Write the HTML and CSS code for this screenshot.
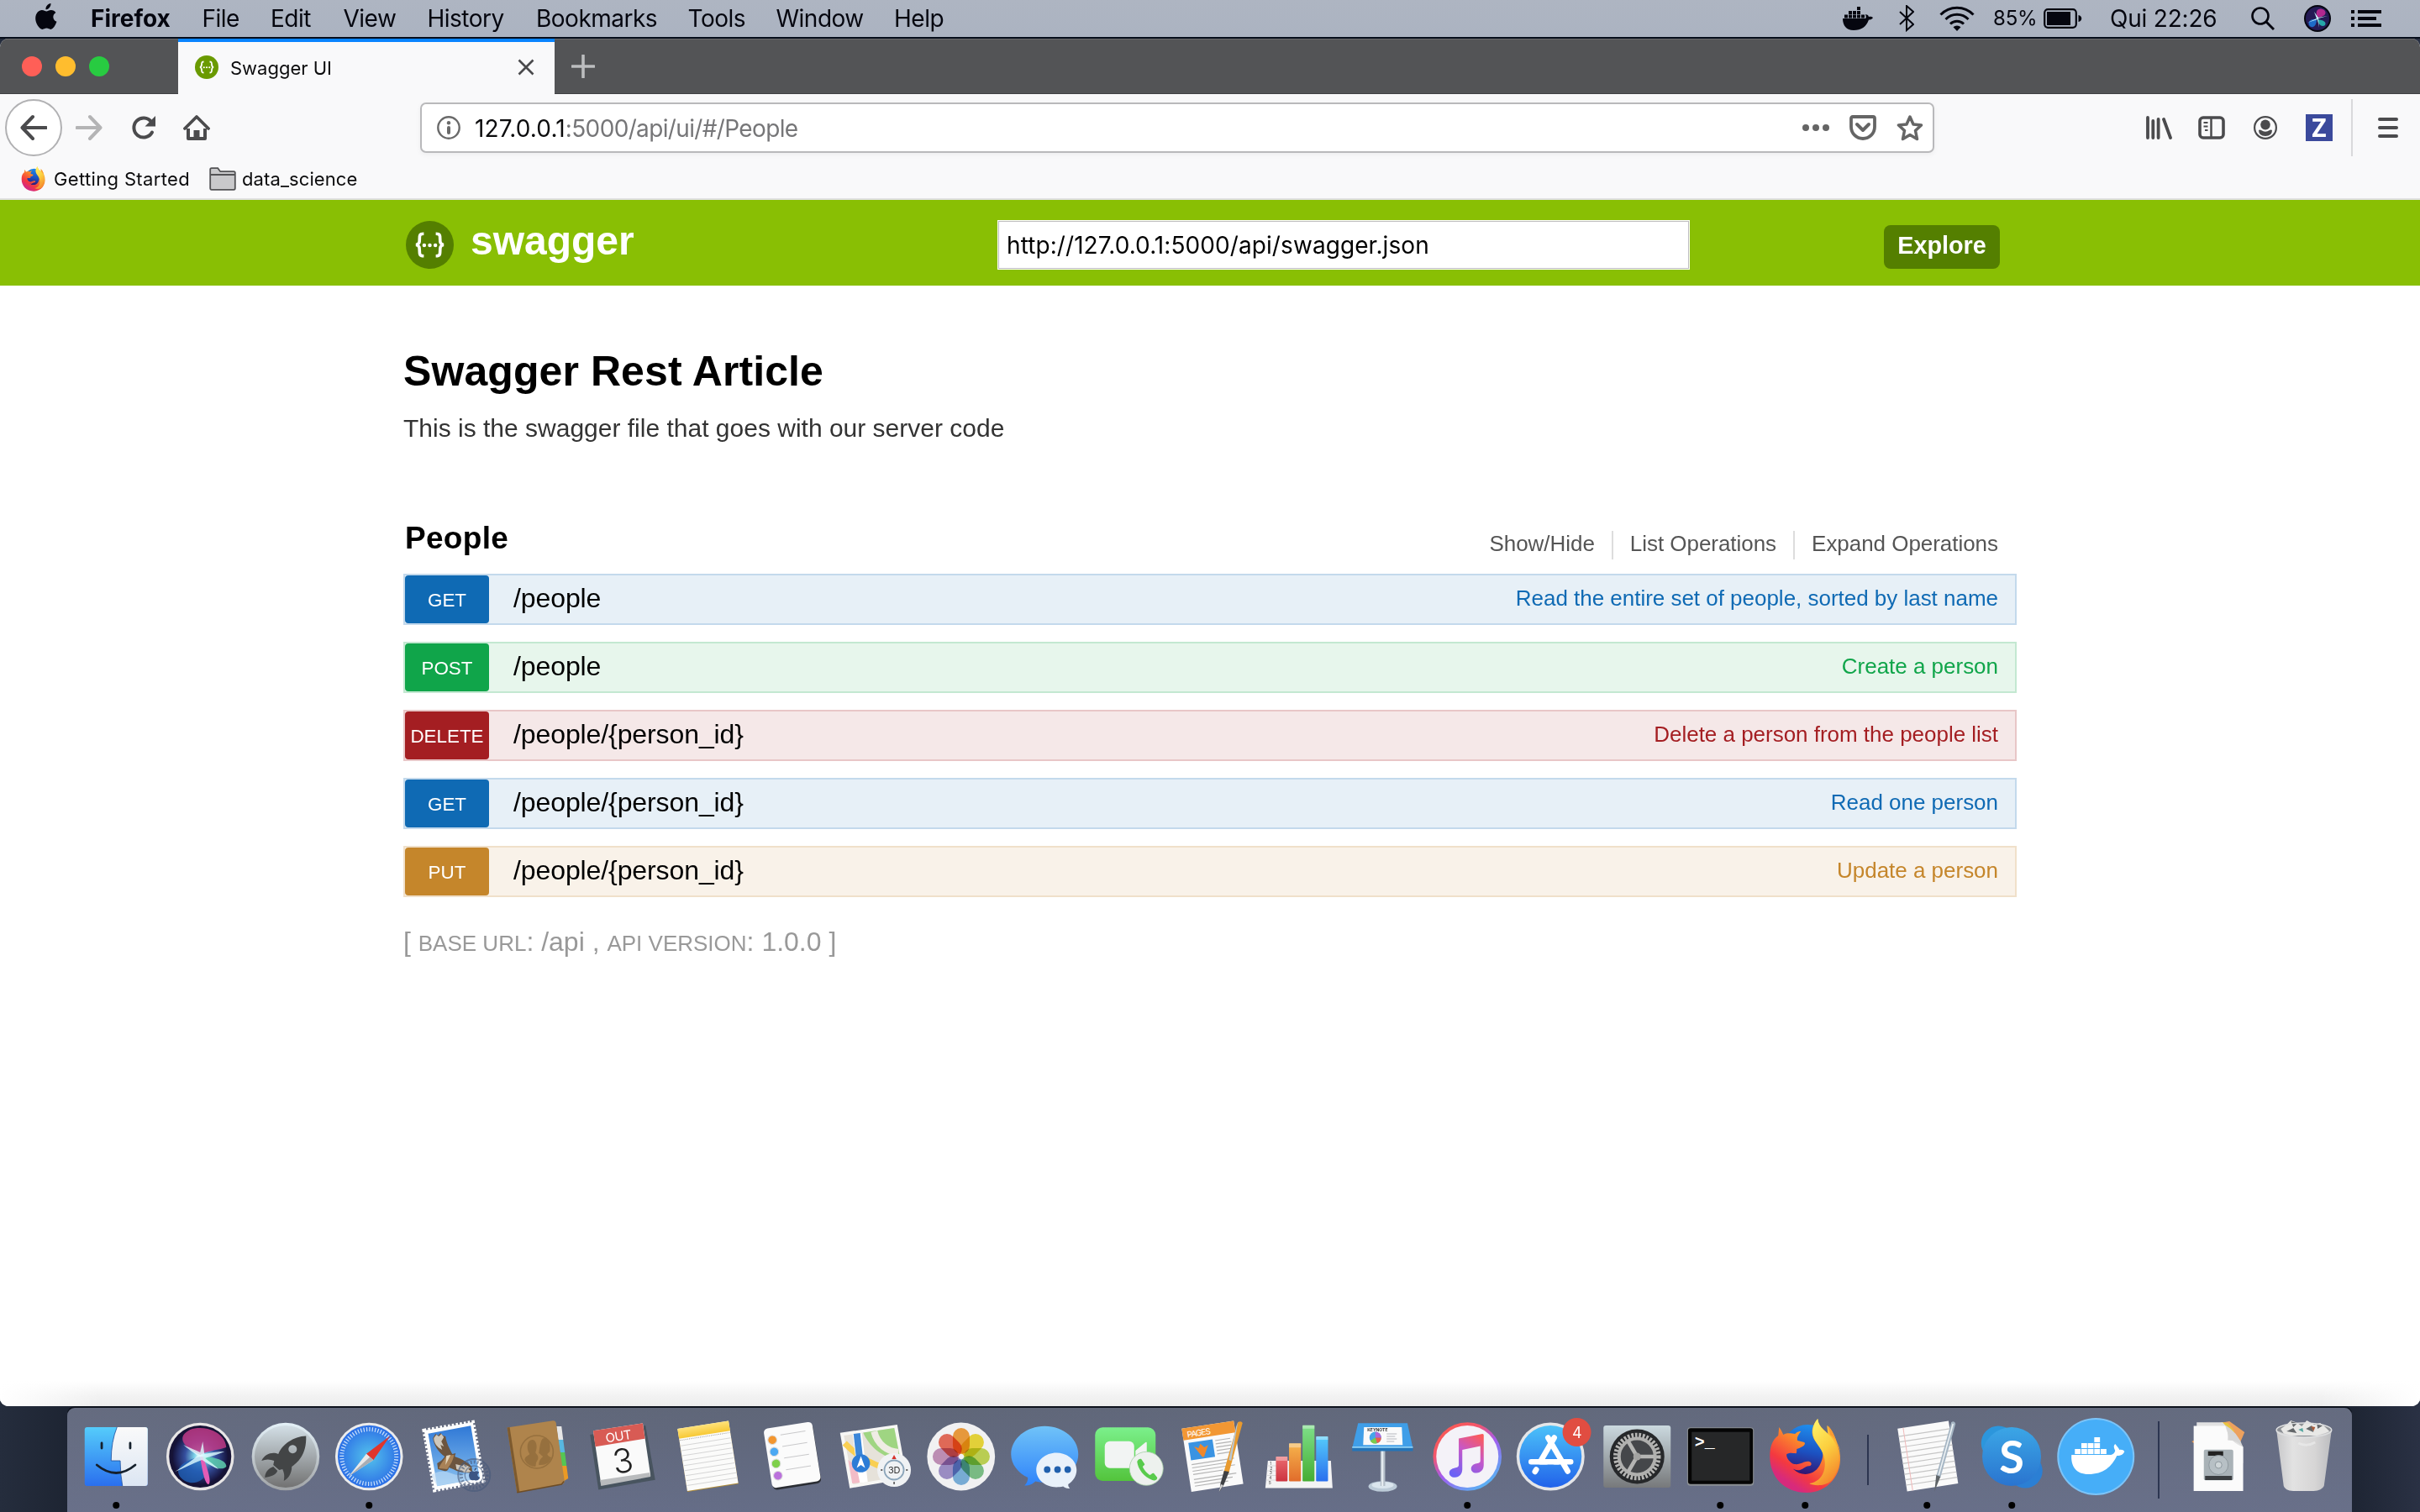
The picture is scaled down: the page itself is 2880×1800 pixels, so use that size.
FILE: index.html
```html
<!DOCTYPE html>
<html lang="en">
<head>
<meta charset="utf-8">
<title>Swagger UI</title>
<link rel="stylesheet" href="styles.css">
</head>
<body>
<svg class="defs" width="0" height="0" aria-hidden="true">
  <defs>
    <linearGradient id="gBlue" x1="0" y1="0" x2="0" y2="1"><stop offset="0" stop-color="#55ccfb"/><stop offset="1" stop-color="#2a6fee"/></linearGradient>
    <linearGradient id="gPaper" x1="0" y1="0" x2="0" y2="1"><stop offset="0" stop-color="#fafafa"/><stop offset="1" stop-color="#dce6f3"/></linearGradient>
    <linearGradient id="gLaunch" x1="0" y1="0" x2="0" y2="1"><stop offset="0" stop-color="#d3dfe6"/><stop offset="1" stop-color="#727272"/></linearGradient>
    <linearGradient id="gRing" x1="0" y1="0" x2="0" y2="1"><stop offset="0" stop-color="#e4f1f8"/><stop offset="1" stop-color="#a0a3a6"/></linearGradient>
    <radialGradient id="gSafari"><stop offset="0" stop-color="#54c3ec"/><stop offset="1" stop-color="#2c6fe6"/></radialGradient>
    <linearGradient id="gSky" x1="0" y1="0" x2="0" y2="1"><stop offset="0" stop-color="#2f78d6"/><stop offset="1" stop-color="#8cc3f0"/></linearGradient>
    <linearGradient id="gYellow" x1="0" y1="0" x2="0" y2="1"><stop offset="0" stop-color="#ffe27a"/><stop offset="1" stop-color="#f7c833"/></linearGradient>
    <linearGradient id="gMsg" x1="0" y1="0" x2="0" y2="1"><stop offset="0" stop-color="#70c3f8"/><stop offset="1" stop-color="#2f83fa"/></linearGradient>
    <linearGradient id="gGreen" x1="0" y1="0" x2="0" y2="1"><stop offset="0" stop-color="#7bf08b"/><stop offset="1" stop-color="#53c43c"/></linearGradient>
    <linearGradient id="gApp" x1="0" y1="0" x2="0" y2="1"><stop offset="0" stop-color="#4cc2f9"/><stop offset="1" stop-color="#2162ea"/></linearGradient>
    <linearGradient id="gTunes" x1="0.1" y1="0" x2="0.8" y2="1"><stop offset="0" stop-color="#fb5c4c"/><stop offset=".3" stop-color="#f4556b"/><stop offset=".55" stop-color="#a25cf0"/><stop offset="1" stop-color="#4cc0f5"/></linearGradient>
    <linearGradient id="gNote" x1="0.8" y1="0" x2="0.3" y2="1"><stop offset="0" stop-color="#fb5a5c"/><stop offset=".45" stop-color="#c657c9"/><stop offset="1" stop-color="#6c62f5"/></linearGradient>
    <linearGradient id="gMetal" x1="0" y1="0" x2="0" y2="1"><stop offset="0" stop-color="#cbd9df"/><stop offset="1" stop-color="#77797b"/></linearGradient>
    <linearGradient id="gFox" x1=".8" y1="0" x2=".25" y2=".85"><stop offset="0" stop-color="#ffcf3d"/><stop offset=".45" stop-color="#fb8a2c"/><stop offset=".8" stop-color="#f4393f"/><stop offset="1" stop-color="#d72a7c"/></linearGradient>
    <linearGradient id="gFlame" x1=".2" y1="0" x2=".6" y2="1"><stop offset="0" stop-color="#fff36a"/><stop offset=".5" stop-color="#fbcf3f"/><stop offset="1" stop-color="#f5882c"/></linearGradient>
    <linearGradient id="gGlobe" x1=".6" y1="0" x2=".4" y2="1"><stop offset="0" stop-color="#1f8fee"/><stop offset=".55" stop-color="#1c50c0"/><stop offset="1" stop-color="#36116b"/></linearGradient>
    <linearGradient id="gSkype" x1="0" y1="0" x2="0" y2="1"><stop offset="0" stop-color="#3ba6e6"/><stop offset="1" stop-color="#2a74cf"/></linearGradient>
    <radialGradient id="gSiri"><stop offset="0" stop-color="#ffffff"/><stop offset=".2" stop-color="#7fd6ea"/><stop offset=".55" stop-color="#354f9e"/><stop offset="1" stop-color="#15123a"/></radialGradient>
    <linearGradient id="gTrash" x1="0" y1="0" x2="1" y2="0"><stop offset="0" stop-color="#c8c8ca"/><stop offset=".3" stop-color="#e2e2e2"/><stop offset=".7" stop-color="#d6d5d5"/><stop offset="1" stop-color="#bcbdc0"/></linearGradient>
    <linearGradient id="gRed" x1="0" y1="0" x2="0" y2="1"><stop offset="0" stop-color="#ea6b70"/><stop offset="1" stop-color="#cc3440"/></linearGradient>
    <linearGradient id="gOrange" x1="0" y1="0" x2="0" y2="1"><stop offset="0" stop-color="#f6b44c"/><stop offset="1" stop-color="#e16c2b"/></linearGradient>
    <linearGradient id="gLime" x1="0" y1="0" x2="0" y2="1"><stop offset="0" stop-color="#7fe08a"/><stop offset="1" stop-color="#45ad33"/></linearGradient>
    <symbol id="firefox" viewBox="-44 12 90 90">
      <circle cx="3" cy="50" r="30" fill="url(#gGlobe)"/>
      <path fill="url(#gFox)" d="M-31 23C-28 27-27 30-26 32C-20 29-16 31-12 31C-9 28-7 28-5 28C-9 33-10 36-9 39L-1 41C1 43-1 46-10 49C-10 53-10 55-12 54C-15 54-18 53-22 55C-23 60-17 66-13 67C-4 68-2 63 5 64C8 65 8 68 6 69C1 69-1 72-6 74C-12 75-14 72-14 73C-5 82 10 81 17 69C23 58 22 51 17 45C7 36 5 25 15 13C15 21 23 26 27 31L26 21C34 28 38 40 41 52C46 80 26 101 2 101C-25 101-42 82-42 58C-42 46-39 38-32 33Z"/>
      <path fill="url(#gFlame)" d="M15 13C16 25 27 29 32 36C44 51 42 73 32 86C24 94 10 93 5 90C22 88 29 68 19 50C14 42 8 36 9 26C10 20 12 16 15 13Z"/>
      <path fill="#fb9b32" d="M27 21C35 29 36 38 42 52C40 44 36 36 30 32Z"/>
    </symbol>
    <symbol id="braces" viewBox="0 0 56 56">
      <circle cx="28" cy="28" r="28"/>
      <g fill="none" stroke="#fff" stroke-width="3.6"><path d="M21 15c-5 0-5 2-5 6s0 6-4 7c4 1 4 3 4 7s0 6 5 6"/><path d="M35 15c5 0 5 2 5 6s0 6 4 7c-4 1-4 3-4 7s0 6-5 6"/></g>
      <g fill="#fff"><circle cx="21.500" cy="28.500" r="2.200"/><circle cx="28" cy="28.500" r="2.200"/><circle cx="34.500" cy="28.500" r="2.200"/></g>
    </symbol>
  </defs>
</svg>

<header class="menubar">
  <svg class="apple" viewBox="0 0 26 32"><path d="M18.500 0c.3 3.600-2.600 7.400-6 7.300C12 3.900 15.200.4 18.500 0zM13.300 9.500c1.300 0 3-1.700 5.600-1.600 2.300.1 4.300 1.200 5.500 3-4.500 2.700-3.900 8.900 1.100 10.900-1.500 4.300-4.400 9-7 9.100-1.900.1-2.700-1.300-5-1.300-2.400 0-3.200 1.300-5 1.300C4.600 31 0 23.400.2 17.600.4 11.500 4.200 8 7.900 8c2.300 0 4 1.500 5.400 1.500z"/></svg>
  <nav class="menus">
    <span class="app">Firefox</span><span>File</span><span>Edit</span><span>View</span><span>History</span><span>Bookmarks</span><span>Tools</span><span>Window</span><span>Help</span>
  </nav>
  <div class="status">
    <svg class="s-docker" viewBox="0 0 36 28"><path d="M0 14h27c1-1 1-2 0-5l3 1 1 2c2-.5 4 0 5 1-1 2-3 2.500-5 2.500C28 24 22 28 13 28 4 28 0 22 0 14zM2 9.500h4v4H2zM7 9.500h4v4H7zM12 9.500h4v4h-4zM17 9.500h4v4h-4zM22 9.500h4v4h-4zM7 5h4v4H7zM12 5h4v4h-4zM17 5h4v4h-4zM17 0h4v4h-4z"/></svg>
    <svg class="s-bt" viewBox="0 0 18 32"><path d="M1 8l16 15-8 7V1l8 7L1 23" fill="none" stroke="#05060f" stroke-width="2"/></svg>
    <svg class="s-wifi" viewBox="0 0 42 30"><g fill="none" stroke="#05060f" stroke-width="3"><path d="M1.500 10.500a27 27 0 0 1 39 0"/><path d="M7.500 16a19 19 0 0 1 27 0"/><path d="M13 21.500a11.500 11.500 0 0 1 16 0"/></g><path d="M21 30l-4.500-4.800a6.500 6.500 0 0 1 9 0z"/></svg>
    <span class="percent">85%</span>
    <svg class="s-bat" viewBox="0 0 46 24"><rect x="1.200" y="1.200" width="37.600" height="21.600" rx="4" fill="none" stroke="#05060f" stroke-width="2.200"/><rect x="4" y="4" width="28" height="16"/><path d="M41.500 8c5 1 5 7 0 8z"/></svg>
    <span class="clock">Qui 22:26</span>
    <svg class="s-search" viewBox="0 0 28 28"><circle cx="11" cy="11" r="9.500" fill="none" stroke="#05060f" stroke-width="2.600"/><path d="M18 18l9 9" stroke="#05060f" stroke-width="3"/></svg>
    <svg class="s-siri" viewBox="0 0 32 32"><circle cx="16" cy="16" r="16"/><circle cx="16" cy="16" r="14" fill="#241a55"/><path d="M16 15C12 6 18 2 24 6c4 4 0 8-8 9z" fill="#b0288e"/><path d="M15 17C8 16 4 20 6 24c4 5 9 1 9-7z" fill="#1e6bc8"/><path d="M16 17c7 1 11 3 9 7-4 3-8-1-9-7z" fill="#25a6a9"/><path d="M4 21l12-4 2 10-1-11 11-3-11 2-5-7 3 8z" fill="#c9f6ff"/></svg>
    <svg class="s-list" viewBox="0 0 36 20"><path d="M0 0h4v4H0zM8 0h28v4H8zM0 8h4v4H0zM8 8h22v4H8zM0 16h4v4H0zM8 16h28v4H8z"/></svg>
  </div>
</header>

<main class="window">
  <div class="tabstrip">
    <div class="lights"><i class="red"></i><i class="amber"></i><i class="green"></i></div>
    <div class="tab">
      <svg class="favicon" fill="#6a9a00"><use href="#braces"/></svg>
      <span>Swagger UI</span>
      <svg class="close" viewBox="0 0 20 20"><path d="M1.500 1.500l17 17M18.500 1.500l-17 17" stroke="#4a4a4c" stroke-width="2.600"/></svg>
    </div>
    <svg class="newtab" viewBox="0 0 28 28"><path d="M14 1v26M1 14h26" stroke="#bcbdbf" stroke-width="3.600" stroke-linecap="round"/></svg>
  </div>

  <div class="toolbar">
    <div class="back"><svg viewBox="0 0 32 32"><path d="M31 16H3M15 3L2.500 16 15 29" fill="none" stroke="#4b4b4d" stroke-width="4" stroke-linecap="round" stroke-linejoin="round"/></svg></div>
    <svg class="forward" viewBox="0 0 32 32"><path d="M1.500 16H29M17 3l12.500 13L17 29" fill="none" stroke="#b4b4b5" stroke-width="4" stroke-linecap="round" stroke-linejoin="round"/></svg>
    <svg class="reload" viewBox="0 0 32 32"><path d="M26 21.500A11.500 11.500 0 1 1 25 9" fill="none" stroke="#4b4b4d" stroke-width="4" stroke-linecap="round"/><path d="M30 2v12.500H17.500z" fill="#4b4b4d"/></svg>
    <svg class="home" viewBox="0 0 32 32"><path d="M2 17L16 3l14 14" fill="none" stroke="#4b4b4d" stroke-width="3.800" stroke-linecap="round" stroke-linejoin="round"/><path d="M6 17v12h20V17" fill="none" stroke="#4b4b4d" stroke-width="4" stroke-linejoin="round"/><path d="M12.500 30V19h7v11z" fill="#4b4b4d"/></svg>
    <div class="urlbar">
      <svg class="info" viewBox="0 0 28 28"><circle cx="14" cy="14" r="12.700" fill="none" stroke="#6a6a6a" stroke-width="2.400"/><circle cx="14" cy="8.200" r="2.200" fill="#6a6a6a"/><rect x="12" y="12" width="4" height="10" rx="2" fill="#6a6a6a"/></svg>
      <span class="url"><b>127.0.0.1</b>:5000/api/ui/#/People</span>
      <svg class="dots" viewBox="0 0 32 8" fill="#656565"><circle cx="4" cy="4" r="4"/><circle cx="16" cy="4" r="4"/><circle cx="28" cy="4" r="4"/></svg>
      <svg class="pocket" viewBox="0 0 32 30"><path d="M4 2h24q2 0 2 2v10a14 14 0 0 1-28 0V4q0-2 2-2z" fill="none" stroke="#656565" stroke-width="3.800"/><path d="M9 11l7 7 7-7" fill="none" stroke="#656565" stroke-width="4" stroke-linecap="round" stroke-linejoin="round"/></svg>
      <svg class="star" viewBox="0 0 32 32"><path d="M16 3l4 9 9.500 1-7 6.500 2 10-8.500-5-8.500 5 2-10-7-6.500 9.500-1z" fill="none" stroke="#656565" stroke-width="3.500" stroke-linejoin="round"/></svg>
    </div>
    <svg class="library" viewBox="0 0 32 32"><g stroke="#4b4b4d" stroke-width="3.800" stroke-linecap="round"><path d="M3 4v24M9.300 8v20M15.600 6v22M22 6l8 22"/></g></svg>
    <svg class="sidebar" viewBox="0 0 32 32"><rect x="2" y="4" width="28" height="24" rx="4" fill="none" stroke="#4b4b4d" stroke-width="3.600"/><path d="M15.500 4v24" stroke="#4b4b4d" stroke-width="2.500"/><path d="M6.500 10h5M6.500 14.500h5M8 19h3.500" stroke="#4b4b4d" stroke-width="2"/></svg>
    <svg class="account" viewBox="0 0 28 28"><circle cx="14" cy="14" r="12.900" fill="none" stroke="#4b4b4d" stroke-width="2.200"/><ellipse cx="14" cy="10.500" rx="5.800" ry="6"/><path d="M6 17q1.500-1 3 0 5 3.500 10 0 1.500-1 3 0 0 7-8 7t-8-7z"/></svg>
    <div class="zotero">Z</div>
    <svg class="burger" viewBox="0 0 24 24"><path d="M2 2h20M2 12h20M2 22h20" stroke="#4b4b4d" stroke-width="4" stroke-linecap="round"/></svg>
  </div>

  <div class="bookmarks">
    <svg class="bm-fox"><use href="#firefox"/></svg><span>Getting Started</span>
    <svg class="folder" viewBox="0 0 32 28"><path d="M1.200 25V2.800q0-1.600 1.600-1.600h7.400l3 4h16q1.600 0 1.600 1.600V25q0 1.800-1.600 1.800H2.800Q1.200 26.800 1.200 25z" fill="#c9c9cb" stroke="#535355" stroke-width="1.800"/><path d="M1 9h30" stroke="#535355" stroke-width="2"/></svg><span class="bm-folder">data_science</span>
  </div>

  <div class="swagger-bar">
    <svg class="logo" fill="#547f00"><use href="#braces"/></svg>
    <span class="brand">swagger</span>
    <div class="api-url">http://127.0.0.1:5000/api/swagger.json</div>
    <div class="explore">Explore</div>
  </div>

  <section class="content">
    <h1>Swagger Rest Article</h1>
    <p class="desc">This is the swagger file that goes with our server code</p>
    <div class="resource">
      <h2>People</h2>
      <ul><li>Show/Hide</li><li>List Operations</li><li>Expand Operations</li></ul>
    </div>
    <div class="ops">
      <div class="op get"><b>GET</b><span class="path">/people</span><span class="sum">Read the entire set of people, sorted by last name</span></div>
      <div class="op post"><b>POST</b><span class="path">/people</span><span class="sum">Create a person</span></div>
      <div class="op delete"><b>DELETE</b><span class="path">/people/{person_id}</span><span class="sum">Delete a person from the people list</span></div>
      <div class="op get"><b>GET</b><span class="path">/people/{person_id}</span><span class="sum">Read one person</span></div>
      <div class="op put"><b>PUT</b><span class="path">/people/{person_id}</span><span class="sum">Update a person</span></div>
    </div>
    <p class="foot">[ <small>BASE URL</small>: /api , <small>API VERSION</small>: 1.0.0 ]</p>
  </section>
</main>

<footer class="dock">
  <!-- Finder -->
  <svg viewBox="-50 0 100 124"><rect x="-37.500" y="23" width="75" height="70" rx="3" fill="url(#gBlue)"/><path d="M1 23H34.500q3 0 3 3V90q0 3-3 3H7.500Q5 80 4.800 63H-6Q-6 40 1 23z" fill="url(#gPaper)"/><path d="M1 23Q-6 40-6 63H4.800Q5 80 7.500 93" fill="none" stroke="#1b4d9a" stroke-width=".8"/><path d="M-17.200 42v6M16.700 42v6M-23 68Q0 87 22.700 68" fill="none" stroke="#15202c" stroke-width="2.800" stroke-linecap="round"/><circle cy="116" r="4"/></svg>
  <!-- Siri -->
  <svg viewBox="-50 0 100 124"><circle cy="58" r="40.300" fill="#e8e6e6"/><circle cy="58" r="37" fill="#161336"/><circle cy="58" r="33" fill="url(#gSiri)"/><path d="M0 56C-22 46-28 34-12 26 4 20 30 28 31 47 24 50 10 50 0 56z" fill="#c03a86" opacity=".85"/><path d="M0 58C-16 62-32 70-24 82-14 94 2 90 8 78z" fill="#2062b8" opacity=".8"/><path d="M2 58C14 58 32 62 31 70 26 76 10 70 2 58z" fill="#5ecfae" opacity=".85"/><path d="M0 58C2 74 6 92 10 91 14 88 8 70 3 58z" fill="#e45cb6"/><path d="M-30 76C-16 67-8 61-3 57-8 53-16 48-20 44-12 48-4 51 0 53L3 40 5 55C14 53 22 52 29 52 20 56 12 58 6 60 11 64 18 69 22 73 14 70 7 65 2 62-8 66-20 72-30 76z" fill="#dffcff" opacity=".8"/></svg>
  <!-- Launchpad -->
  <svg viewBox="-50 0 100 124"><circle cx=".7" cy="58" r="40.300" fill="url(#gRing)"/><circle cx=".7" cy="58" r="37" fill="url(#gLaunch)"/><path fill="#434546" fill-rule="evenodd" d="M25 33.500C26 56 14 66 8 70 8 78 4 84-1.500 87 0 79-2 76-3 73L-7 74-14 68-13 63C-18 61-23 61-28 63-24 54-14 52-8 55-4 44 10 34 25 33.500zM9 44.200a5 5 0 1 0 .1 0z"/><path d="M-14 70l5 5c-2 5-8 7-15 8 0-6 4-11 10-13z" fill="#434546"/></svg>
  <!-- Safari -->
  <svg viewBox="-50 0 100 124"><circle cy="58" r="40.300" fill="#ececec"/><circle cy="58" r="37.300" fill="url(#gSafari)"/><circle cy="58" r="32.500" fill="none" stroke="#e6f3ff" stroke-width="5" stroke-dasharray="1.200 2.200" opacity=".85"/><path d="M25.200 33.300L5 62.300-3.300 54.700z" fill="#e0352b"/><path d="M-24 81.300L-3.300 54.700 5 62.300z" fill="#e9e9e9"/><path d="M-24 81.300L1 58.500 5 62.300z" fill="#a9adb3"/><circle cy="116" r="4"/></svg>
  <!-- Mail -->
  <svg viewBox="-50 0 100 124"><path d="M-35.500 27L22.500 17 35 87-23 98z" fill="#fdfdfd" stroke="#fdfdfd" stroke-width="4.500" stroke-dasharray="2.600 2.200"/><path d="M-30.700 30.700L20 21.300 30.700 84-20 93.300z" fill="url(#gSky)"/><path d="M-27 80q12-8 24-2t30-6l3 12-50 9z" fill="#c3def5" opacity=".6"/><path d="M-25 36L-22 31-19 33-16 30-13 33-10 34C-9 42-5 49-2 55L2 54 1 58C10 61 18 66 21 70L22 77C14 78 6 77-1 73L-6 71C-7 75-9 76-12 75L-19 73-20 66C-16 64-13 61-11 58C-18 53-24 45-25 36Z" fill="#6c553f"/><path d="M-24 36l3-4 3 2 3-3 3 4-3 5 3 6-4-2 2 6c-6-3-10-8-10-14zM2 67l8 2 2-2 8 4-3 2 4 3-8 1-10-4z" fill="#cfc8bc"/><path d="M-9 57l9-1c-1 7-4 11-8 17l-10-1c2-6 6-9 9-15z" fill="#a98257"/><path d="M-9 57l5-1-6 12z" fill="#e4d6bd"/><g fill="none" stroke="#47597a" opacity=".6"><circle cx="24" cy="80" r="19" stroke-width="2"/><circle cx="24" cy="80" r="15.500" stroke-width="4" stroke-dasharray="2 2"/><circle cx="24" cy="80" r="11" stroke-width="1.200"/></g><path d="M24 76c3-2 6 0 6 1-3 2-2 5 1 6-2 4-4 4-7 3-3 1-5 0-6-4-1-5 3-8 6-6zM24 75q0-3 3-4 0 3-3 4z" fill="#3c5684"/></svg>
  <!-- Contacts -->
  <svg viewBox="-50 0 100 124"><path d="M22 22l6 0 2 16H24z" fill="#e6e6e6"/><path d="M24 38h6l2 15h-6z" fill="#58b7e0"/><path d="M26 53h6l2 16h-6z" fill="#55c653"/><path d="M28 69h6l2 15-5 3z" fill="#eb9a25"/><path d="M-36.700 23.500L18 15.300q3 0 3.500 3L31.500 87q0 3-3 4L-25 100.700z" fill="#af844c"/><path d="M-36.700 23.500l3-.5L-22 99.500l-3 1.200z" fill="#7d5a2e"/><path d="M-25 100.700l53-9.700 3-3.500" fill="none" stroke="#6d4c25" stroke-width="1.500"/><circle cx="-1.400" cy="52.500" r="19.500" fill="none" stroke="#96703e" stroke-width="1.600"/><path d="M-16 62c1-5 5-5 6-7-5-8-2-17 3-17s7 8 4 15c1 3 4 3 3 8q-3 4-3 9-9 0-13-8zM1 68c0-6 3-8 5-10-3-2-4-4-5-4 2-14 3-18 7-18 6 0 7 9 6 16l-3 3q1 3 5 4-3 10-15 9z" fill="#96703e"/></svg>
  <!-- Calendar -->
  <svg viewBox="-50 0 100 124"><path d="M-39 32l66-11L38.500 85.700-29 97.500z" fill="#48545f"/><path d="M-35.300 27.300l59-9 9.300 62.400-59 10z" fill="#fafafa"/><path d="M-27 86l59-9 1 5-59 11z" fill="#b9bbbd"/><path d="M-35.300 27.300l59-9 2.600 18.400-59 9.500z" fill="#d85b54"/><g transform="rotate(-8.700)" text-anchor="middle"><text x="-10.500" y="38" font-size="15" letter-spacing="-.6" fill="#fff">OUT</text><text x="-9.500" y="76.500" font-size="40" font-weight="300" fill="#222">3</text></g></svg>
  <!-- Notes -->
  <svg viewBox="-50 0 100 124"><g transform="translate(1.200 57.300) rotate(-8.900)"><rect x="-30.700" y="-37" width="61.400" height="75.500" fill="#b08d3a"/><rect x="-30.700" y="-37.500" width="61.400" height="75" fill="#fbfbfa"/><rect x="-30.700" y="-37.500" width="61.400" height="12" fill="url(#gYellow)"/><path d="M-30 -23.500H30" stroke="#999" stroke-width="1" stroke-dasharray="1 1.200"/><path d="M-30-17H30M-30-11H30M-30-5H30M-30 1H30M-30 7H30M-30 13H30M-30 19H30M-30 25H30M-30 31H30" stroke="#d6d6d6" stroke-width="1"/></g></svg>
  <!-- Reminders -->
  <svg viewBox="-50 0 100 124"><g transform="translate(.5 56.300) rotate(-8.900)"><rect x="-28.500" y="-34" width="58" height="72" rx="5" fill="#2a2d33"/><rect x="-29.200" y="-36" width="58.500" height="71.500" rx="5" fill="#fbfbfb"/><path d="M-10-26H20M-10-12H20M-10 2H20M-10 16H20" stroke="#c9c9cb" stroke-width="1"/><g stroke="#ddd"><circle cx="-20.500" cy="-21.500" r="5.300" fill="#f3962f"/><circle cx="-20.500" cy="-7.300" r="5.300" fill="#4ba8f2"/><circle cx="-20.500" cy="7" r="5.300" fill="#7fd04b"/><circle cx="-20.500" cy="21.500" r="5.300" fill="#bb72dc"/></g></g></svg>
  <!-- Maps -->
  <svg viewBox="-50 0 100 124"><path d="M-42.500 29.700l68-9.700L37 84-31 95.700z" fill="#f7f7f5"/><path d="M-38 33l60-9 11 57-60 10z" fill="#e6e2da"/><path d="M-15 29.500l37-5.500 7 36C10 62-8 46-15 29.500z" fill="#9fd582"/><path d="M-2 28C2 44 14 52 27 53" fill="none" stroke="#efece4" stroke-width="8"/><path d="M-37 42C-20 60 0 70 32 78" fill="none" stroke="#f9cf52" stroke-width="7"/><path d="M-22 31l7 58" stroke="#fff" stroke-width="11"/><path d="M-22.500 30.500L-19 62" stroke="#3b86d8" stroke-width="8"/><path d="M-33 62l5 28 9-1-4-20z" fill="#f3bcc7"/><circle cx="-17.700" cy="66" r="10.800" fill="#2c7cd6"/><path d="M-17.700 57.500l5 14-5-3.500-5 3.500z" fill="#fff"/><circle cx="21.800" cy="74" r="20" fill="#f0f2f4"/><circle cx="21.800" cy="74" r="11.500" fill="none" stroke="#8ba5ba" stroke-width="1.800"/><path d="M21.800 56l2.700 5h-5.400z" fill="#d8332b"/><path d="M6 74h2M36 74h2M21.800 88v3" stroke="#333" stroke-width="1.300"/><text x="21.800" y="78.200" font-size="11" text-anchor="middle" letter-spacing="-.4" fill="#333">3D</text></svg>
  <!-- Photos -->
  <svg viewBox="-50 0 100 124"><circle cx=".5" cy="58" r="40.400" fill="#f1f1f2"/><g transform="translate(.7 58)"><g class="petals"><rect x="-10" y="-34" width="20" height="31" rx="10" fill="#f4a13f"/><rect x="-10" y="-34" width="20" height="31" rx="10" fill="#f0dc3c" transform="rotate(45)"/><rect x="-10" y="-34" width="20" height="31" rx="10" fill="#c4d957" transform="rotate(90)"/><rect x="-10" y="-34" width="20" height="31" rx="10" fill="#80c58a" transform="rotate(135)"/><rect x="-10" y="-34" width="20" height="31" rx="10" fill="#7eb5e0" transform="rotate(180)"/><rect x="-10" y="-34" width="20" height="31" rx="10" fill="#a394cd" transform="rotate(225)"/><rect x="-10" y="-34" width="20" height="31" rx="10" fill="#c795bd" transform="rotate(270)"/><rect x="-10" y="-34" width="20" height="31" rx="10" fill="#ec6f5c" transform="rotate(315)"/></g></g></svg>
  <!-- Messages -->
  <svg viewBox="-50 0 100 124"><path d="M0 21.700c22 0 40 15 40 33.500S22 89 0 89c-4 0-8-.5-11-1.400-3 3-7 5-13 5 3-3 4-6 4-9.500C-32 77-40 67-40 55.200-40 36.700-22 21.700 0 21.700z" fill="url(#gMsg)"/><path d="M14 53.500c13 0 24 9 24 20.500 0 7-4 13-10 17 0 2 .5 3.500 2 5-4 0-6-1-8-2.500-3 .6-5 .9-8 .9-13 0-24-9-24-20.400S1 53.500 14 53.500z" fill="#e9f1fa"/><g fill="#2160ad"><circle cx="3" cy="73.500" r="3.900"/><circle cx="15.300" cy="73.500" r="3.900"/><circle cx="27.400" cy="73.500" r="3.900"/></g></svg>
  <!-- FaceTime -->
  <svg viewBox="-50 0 100 124"><rect x="-41" y="23.300" width="72" height="63.700" rx="9" fill="url(#gGreen)"/><rect x="-29.500" y="39.700" width="35" height="32" rx="6" fill="#f2f4f3"/><path d="M7 51l12-10q1.500-1 1.500 1v24q0 2-1.500 1L7 60z" fill="#f2f4f3"/><circle cx="20" cy="72.300" r="20" fill="#edf1ee" stroke="#a5cfa4" stroke-width=".8"/><path d="M9 64c1-3 4-4 5-3l4 6c0 2-3 2-2 4 2 4 5 7 8 9 2 0 3-3 5-2l4 5c0 3-3 4-6 3C17 82 10 73 9 64z" fill="#58cb4c"/></svg>
  <!-- Pages -->
  <svg viewBox="-50 0 100 124"><g transform="translate(-1.300 57.700) rotate(-8.700)"><rect x="-31.200" y="-38" width="62.500" height="76" fill="#fafafa"/><rect x="-31.200" y="-38" width="62.500" height="14" fill="#f29733"/><text x="-26" y="-26.500" font-size="10" letter-spacing="-.9" fill="#fff">PAGES</text><rect x="-26" y="-20" width="29" height="21" fill="#3a93e2"/><path d="M-12-1l-8-14 5 3 3-5 4 5 5-2-7 13z" fill="#f0872a"/><path d="M6-18H24M6-14H25M6-10H24M6-6H25M6-2H24M-26 6H25M-26 10H22M-26 14H25M-26 18H10M-26 24H25M-26 28H20M-26 32H14" stroke="#b4b4b4" stroke-width="1.200"/></g><path d="M29 17q4-2 5.500 1L18 78l-6-1z" fill="#e89a2e"/><path d="M29 17l-2 5-9 40 3 1z" fill="#b9c6cf"/><path d="M12.500 75l6 1L12 92l-5 8 1-9z" fill="#3f4144"/><path d="M8.500 91l3 1-5 8z" fill="#d5d5d5"/></svg>
  <!-- Numbers -->
  <svg viewBox="-50 0 100 124"><path d="M-36.400 63h75l2 32.500h-80z" fill="#f3f3f4"/><path d="M-37 69h12M-37.500 75h12M-38 80.500h12M-38.500 86h12" stroke="#d8d8da"/><g font-size="5" fill="#555"><text x="-34" y="68">1</text><text x="-34" y="73.500">2</text><text x="-34.500" y="79">3</text><text x="-35" y="85">4</text><text x="-35.500" y="91">5</text></g><rect x="-26.800" y="58" width="13.800" height="29.500" rx="1" fill="url(#gRed)"/><rect x="-11.200" y="42.300" width="14.200" height="45.200" rx="1" fill="url(#gOrange)"/><rect x="4.900" y="20.700" width="14.200" height="66.800" rx="1" fill="url(#gLime)"/><rect x="21" y="34" width="14.200" height="53.500" rx="1" fill="url(#gBlue)"/><g fill="#fff" opacity=".35"><path d="M-26.800 58H-13v5h-13.800zM-11.200 42.300H3v5h-14.200zM4.900 20.700h14.200v4H4.900zM21 34h14.200v4H21z"/></g></svg>
  <!-- Keynote -->
  <svg viewBox="-50 0 100 124"><ellipse cx=".3" cy="93.500" rx="17" ry="6.300" fill="#bccbd8"/><ellipse cx=".3" cy="92" rx="13" ry="4" fill="#dbe6ee"/><rect x="-2.400" y="50" width="5.600" height="43" fill="#b4bfc9"/><rect x="-1" y="50" width="2" height="43" fill="#e9eff3"/><path d="M-29 18.300h58.700L36.200 48H-36z" fill="#3f9ee8"/><path d="M-36 47h72.200v4.500H-36z" fill="#2474b7"/><path d="M-36 46h72.200v1.800H-36z" fill="#8fd0f5"/><path d="M-22 23h45l1 21.300h-47z" fill="#fafafa"/><text x="-18" y="28" font-size="5" font-weight="700" fill="#333">KEYNOTE</text><circle cx="-8.500" cy="35.500" r="7" fill="#45a6e8"/><path d="M-8.500 35.500v-7a7 7 0 0 1 7 7z" fill="#b067d8"/><path d="M-8.500 35.500h7a7 7 0 0 1-5 6.600z" fill="#ef5d4a"/><path d="M-8.500 35.500l2 6.700a7 7 0 0 1-8-3z" fill="#7ccb4b"/><path d="M5 31h12M5 34h10M5 37h12M5 40h9" stroke="#b5b8bd" stroke-width="1.200"/></svg>
  <!-- iTunes -->
  <svg viewBox="-50 0 100 124"><circle cy="58" r="40.800" fill="url(#gTunes)"/><circle cy="58" r="37" fill="#f4f2f8"/><path d="M-10.200 36.500L18 31q1.500 0 1.500 1.500V68c0 6-3.500 9-8.500 9.500-4 .3-6.500-2-6.500-5 0-3.500 3-5.500 6.500-6.200 4-.8 4.500-1.500 4.500-4V45.500L-6 50v23c0 6-3.500 9.300-8.500 9.800-4 .3-7-2-7-5.300 0-3.200 3-5 6.500-5.900 3.500-.7 4.800-1.500 4.800-4.100z" fill="url(#gNote)"/><circle cy="116" r="4"/></svg>
  <!-- App Store -->
  <svg viewBox="-50 0 100 124"><circle cx="-1" cy="58" r="40.500" fill="#e5e6e8"/><circle cx="-1" cy="58" r="37" fill="url(#gApp)"/><g stroke="#fff" stroke-width="6.500" stroke-linecap="round"><path d="M3.500 35.500L-12 62M-18 73.500l-1.500 2.500M-4 35.500L19.500 75.500M-24 64.300H-6M4 64.300H23"/><path d="M-13 64.300h21"/></g><circle cx="30.300" cy="29" r="17" fill="#e14d41"/><text x="30.500" y="35.500" font-size="18" text-anchor="middle" fill="#fff">4</text></svg>
  <!-- System Preferences -->
  <svg viewBox="-50 0 100 124"><rect x="-39" y="21" width="80" height="74" rx="3" fill="url(#gMetal)"/><circle cx="1" cy="58" r="32.500" fill="#26282a"/><circle cx="1" cy="58" r="25.500" fill="none" stroke="#b5b5b3" stroke-width="5.500" stroke-dasharray="2.700 1.800"/><circle cx="1" cy="58" r="21.500" fill="#45474a" stroke="#b0b0ae" stroke-width="4"/><path d="M1 58H22M1 58L-9.500 40M1 58L-9.500 76" stroke="#b5b5b3" stroke-width="4.500"/><circle cx="1" cy="58" r="4.500" fill="#a3a3a1"/></svg>
  <!-- Terminal -->
  <svg viewBox="-50 0 100 124"><rect x="-39.400" y="23.300" width="79.400" height="69.500" rx="4" fill="#8b8f93"/><rect x="-38.300" y="24.200" width="77.200" height="66.500" rx="3" fill="#050505"/><rect x="-34" y="28.700" width="69" height="58" fill="#262728"/><text x="-30.500" y="46.500" class="mono" font-size="20" font-weight="700" fill="#fff">&gt;_</text><circle cy="116" r="4"/></svg>
  <!-- Firefox -->
  <svg viewBox="-50 0 100 124"><use href="#firefox" x="-44" y="12" width="90" height="90"/><circle cy="116" r="4"/></svg>

  <i class="sep short"></i>

  <!-- TextEdit -->
  <svg viewBox="-50 0 100 124"><g transform="translate(1 57.200) rotate(-8.700)"><rect x="-30.700" y="-37.500" width="61.400" height="75.500" fill="#fafafa"/><path d="M-30.700-28H30.700M-30.700-21.500H30.700M-30.700-15H30.700M-30.700-8.500H30.700M-30.700-2H30.700M-30.700 4.500H30.700M-30.700 11H30.700M-30.700 17.500H30.700M-30.700 24H30.700M-30.700 30.500H30.700" stroke="#c6c6c6" stroke-width="1.200"/><path d="M-24-37.500V38" stroke="#f0b9b9" stroke-width="1"/></g><path d="M29 17q4-2 5 2L16 83l-5-2z" fill="#a6b6c4"/><path d="M31 19L14 80" stroke="#eef3f6" stroke-width="1.500"/><path d="M11 80l5 2-7 17.500z" fill="#5f6468"/><circle cy="116" r="4"/></svg>
  <!-- Skype -->
  <svg viewBox="-50 0 100 124"><circle cx="-16" cy="42" r="20.500" fill="#2c96dc"/><circle cx="16" cy="75" r="20.500" fill="#2b7fd4"/><circle cx="-.2" cy="58" r="35" fill="url(#gSkype)"/><text x="-.2" y="77.500" font-size="54" font-weight="700" class="skype" text-anchor="middle" fill="#fff">S</text><circle cy="116" r="4"/></svg>
  <!-- Docker -->
  <svg viewBox="-50 0 100 124"><circle cy="58" r="46" fill="#7cc4f8"/><circle cy="58" r="44" fill="#46aef8"/><path fill="#fff" d="M-29 56H18c3-1 4-2 5-5-2-4-2-6 0-8l4 5 1 2c3-.5 5 .5 6 2-1 3-4 5-9 5C19 70 9 79-9 79c-14 0-21-9-20-23zM-25 49h6.800v6H-25zM-17.300 49h6.800v6h-6.800zM-9.600 49h6.800v6h-6.800zM-1.900 49h6.800v6h-6.800zM5.800 49h6.800v6H5.800zM-17.300 42h6.800v6h-6.800zM-9.600 42h6.800v6h-6.800zM-1.900 42h6.800v6h-6.800zM-1.900 35h6.800v6h-6.800z"/></svg>

  <i class="sep tall"></i>

  <!-- Documents -->
  <svg viewBox="-50 0 100 124"><path d="M-2 18l12-2L28 29 22 43z" fill="#eda15e"/><path d="M0 17l8 1 8 10-6 3z" fill="#e8c53f"/><path d="M-35 40l5-2v6z" fill="#e79a55"/><path d="M-29 17.300H2L26 46v20h-55z" fill="#e2e2e2"/><path d="M-32.600 21.500H5q5 20 21.300 25V99h-58.900z" fill="#fbfbfb"/><path d="M5 20.500q4 8 3 18 12 0 18.300 8.500Q20 29 5 20.500z" fill="#d6d6d6"/><rect x="-20.500" y="49.700" width="35" height="36.500" rx="2" fill="#a9b2b7"/><rect x="-15.500" y="51.700" width="18" height="5.300" fill="#222"/><circle cx="-3" cy="68" r="11.500" fill="#b7c0c5" stroke="#8f999f"/><circle cx="-3" cy="68" r="4" fill="#ced5d8" stroke="#8f999f"/><rect x="-19" y="81" width="32" height="5" fill="#3a3d40"/></svg>
  <!-- Trash -->
  <svg viewBox="-50 0 100 124"><ellipse cx="-1.300" cy="26.500" rx="32" ry="8" fill="#8c8f94"/><path d="M-29 25l7-5 5-5 8 3 5 4 6-7 9 5 7-2 6 5 5 5-8 5H-24z" fill="#e8e8e6"/><path d="M-17 16l8 2-5 5zM-22 28l8-4 4 6zM1 25l7-4 2 8zM14 19l7 2-6 4z" fill="#63676a"/><path d="M-8 26l5-2 1 5z" fill="#55a6a0"/><path d="M7 22l5 1-2 5z" fill="#a85b3b"/><path d="M-34 27Q-1 42 31.500 27L22.500 93Q20 98.500 10 99H-14Q-24 98.500-25.500 93z" fill="url(#gTrash)"/><ellipse cx="-1.300" cy="26.500" rx="32.800" ry="8.500" fill="none" stroke="#dedfe0" stroke-width="1.600"/><path d="M-8 42q10 5 20-1" fill="none" stroke="#efeeee" stroke-width="3" opacity=".6"/></svg>
</footer>
</body>
</html>
```
FILE: styles.css
```css
* { box-sizing: border-box; }
html, body { margin: 0; padding: 0; }
body {
  width: 2880px;
  height: 1800px;
  overflow: hidden;
  display: flex;
  flex-direction: column;
  align-items: stretch;
  background: linear-gradient(90deg, #252d3d, #1d2432 3%, #1d2432 97%, #2a3144);
  font-family: Inter, "Liberation Sans", sans-serif;
}
svg { display: block; flex: none; }
.defs { width: 0; height: 0; position: absolute; }

/* macOS menu bar */
.menubar {
  flex: none;
  height: 46px;
  padding: 0 46px 2px 42px;
  display: flex;
  align-items: center;
  background: linear-gradient(#aeb5c2, #abb3c1) 0 0 / 100% 44px no-repeat #060d1b;
  color: #05060f;
  fill: #05060f;
  font-size: 28px;
  line-height: 44px;
}
.apple { width: 26px; height: 32px; margin-bottom: 4px; }
.menus {
  margin-left: 40px;
  display: grid;
  grid-template-columns: 132.500px 81.500px 86.500px 100px 129.500px 180.500px 105px 140.500px 60px;
  letter-spacing: -.5px;
}
.menus .app { font-weight: 700; letter-spacing: 0; }
.status { margin-left: auto; display: flex; align-items: center; }
.s-docker { width: 36px; height: 28px; }
.s-bt { width: 18px; height: 32px; margin-left: 31px; }
.s-wifi { width: 42px; height: 30px; margin-left: 30px; }
.percent { width: 60px; margin-left: 22px; font-size: 24px; letter-spacing: -.2px; }
.s-bat { width: 46px; height: 24px; }
.clock { width: 168px; margin-left: 33px; letter-spacing: -.2px; }
.s-search { width: 28px; height: 28px; }
.s-siri { width: 32px; height: 32px; margin-left: 35px; }
.s-list { width: 36px; height: 20px; margin-left: 24px; }

/* browser window */
.window {
  flex: none;
  height: 1628px;
  display: flex;
  flex-direction: column;
  overflow: hidden;
  border-radius: 10px;
  background: #fff;
}
.tabstrip {
  flex: none;
  height: 66px;
  display: flex;
  align-items: center;
  background: #535456;
  box-shadow: inset 0 1px #6b6c6e, inset 0 -1px #3f4042;
}
.lights { width: 212px; padding-left: 26px; display: flex; gap: 16px; }
.lights i { width: 24px; height: 24px; border-radius: 50%; }
.red { background: #ff5f57; }
.amber { background: #ffbd2e; }
.green { background: #28cb41; }
.tab {
  width: 448px;
  height: 66px;
  padding: 0 24px 0 20px;
  display: flex;
  align-items: center;
  border-top: 4px solid #0a84ff;
  background: #f9f9fa;
  color: #0c0c0d;
  font-size: 22px;
}
.favicon { width: 28px; height: 28px; margin: 0 14px 2px 0; }
.close { width: 20px; height: 20px; margin: 0 0 2px auto; }
.newtab { width: 28px; height: 28px; margin-left: 20px; }

.toolbar {
  flex: none;
  height: 80px;
  padding-left: 6px;
  display: flex;
  align-items: center;
  background: #f9f9fa;
}
.back {
  width: 68px;
  height: 68px;
  display: flex;
  align-items: center;
  justify-content: center;
  border: 2px solid #b1b1b3;
  border-radius: 50%;
  background: #fff;
}
.toolbar svg { width: 32px; height: 32px; }
.toolbar .forward { margin-left: 16px; }
.toolbar .reload { margin-left: 33px; }
.toolbar .home { margin-left: 31px; }
.urlbar {
  width: 1802px;
  height: 60px;
  margin-left: 250px;
  padding: 0 11px 0 18px;
  display: flex;
  align-items: center;
  border: 2px solid #b9b9bb;
  border-radius: 7px;
  background: #fff;
  box-shadow: 0 2px 6px rgba(0, 0, 0, .05);
}
.toolbar .info { width: 28px; height: 28px; }
.url { margin-left: 17px; padding-top: 2px; color: #767678; font-size: 28px; letter-spacing: -.65px; }
.url b { color: #0c0c0d; font-weight: 400; letter-spacing: .15px; }
.toolbar .dots { width: 32px; height: 8px; margin-left: auto; }
.toolbar .pocket { width: 32px; height: 30px; margin-left: 24px; }
.toolbar .star { margin-left: 24px; }
.toolbar .library { margin-left: 251px; }
.toolbar .sidebar { margin-left: 31px; }
.toolbar .account { width: 28px; height: 28px; margin-left: 34px; fill: #4b4b4d; }
.zotero {
  width: 32px;
  height: 32px;
  margin: 0 22px 0 34px;
  background: #3b4a9c;
  color: #fff;
  font: 700 30px/32px "Open Sans", "Noto Sans", sans-serif;
  text-align: center;
}
.toolbar .burger {
  box-sizing: content-box;
  width: 24px;
  height: 24px;
  padding: 22px 26px 22px 30px;
  border-left: 2px solid #d9d9db;
}

.bookmarks {
  flex: none;
  height: 46px;
  padding: 0 0 3px 25px;
  display: flex;
  align-items: center;
  background: #f9f9fa;
  border-bottom: 2px solid #e0e0e1;
  color: #0c0c0d;
  font-size: 22px;
  letter-spacing: .4px;
}
.bm-fox { width: 30px; height: 30px; }
.bookmarks span { width: 162px; margin-left: 9px; white-space: nowrap; letter-spacing: .35px; }
.bookmarks .bm-folder { margin-left: 7px; letter-spacing: .1px; }
.folder { width: 32px; height: 28px; margin-left: 23px; }

/* swagger page */
.swagger-bar {
  flex: none;
  height: 102px;
  padding-left: 483px;
  display: flex;
  align-items: center;
  background: #89bf04;
  color: #fff;
  font-family: "Liberation Sans", Arial, sans-serif;
  font-weight: 700;
}
.logo { width: 57px; height: 57px; margin-top: 5px; }
.brand { width: 627px; margin-left: 20px; padding-bottom: 4px; font-size: 48px; line-height: 56px; }
.api-url {
  width: 824px;
  height: 59px;
  margin-top: 5px;
  padding-left: 10px;
  border: 1px solid #fff;
  box-shadow: inset 0 0 0 1px #bdbdbd;
  background: #fff;
  color: #000;
  font: 400 28px/58px Inter, sans-serif;
  letter-spacing: .08px;
}
.explore {
  width: 138px;
  height: 52px;
  margin: 10px 0 0 231px;
  border-radius: 8px;
  background: #547f00;
  font-size: 28.800px;
  line-height: 48px;
  text-align: center;
}
.content {
  flex: 1;
  width: 2880px;
  padding: 72px 480px 0;
  font-family: "Liberation Sans", Arial, sans-serif;
  background:
    linear-gradient(90deg, #fff, rgba(255, 255, 255, 0) 120px, rgba(255, 255, 255, 0) 2760px, #fff) 0 100% / 100% 30px no-repeat,
    linear-gradient(#fff, #f2f2f2 60%, #ededed) 0 100% / 100% 30px no-repeat #fff;
}
h1 { margin: 0; color: #000; font-size: 50px; line-height: 60px; letter-spacing: .08px; }
.desc { margin: 20px 0 0; color: #333; font-size: 30px; line-height: 36px; }
.resource {
  height: 155px;
  display: flex;
  justify-content: space-between;
  align-items: flex-end;
  padding: 0 22px 17px 2px;
}
h2 { margin: 0; padding-bottom: 3px; color: #000; font-size: 37px; line-height: 44px; letter-spacing: .3px; }
.resource ul { margin: 0; padding: 0; display: flex; list-style: none; color: #555; font-size: 26px; line-height: 30px; }
.resource li { height: 34px; padding-left: 20px; margin-left: 20px; border-left: 2px solid #ddd; letter-spacing: -.04px; }
.resource li:first-child { border: 0; }
.ops { display: grid; gap: 20px; }
.op {
  height: 61px;
  display: flex;
  align-items: center;
  border: 2px solid var(--line);
  background: var(--bg);
  padding-right: 20px;
}
.op b {
  width: 100px;
  height: 57px;
  border-radius: 4px;
  background: var(--main);
  color: #fff;
  font-size: 22.400px;
  font-weight: 400;
  line-height: 59px;
  text-align: center;
}
.path { margin-left: 29px; padding-bottom: 4px; color: #000; font-size: 32px; line-height: 40px; letter-spacing: -.1px; }
.sum { margin-left: auto; padding-bottom: 4px; color: var(--main); font-size: 26px; line-height: 32px; letter-spacing: -.02px; }
.get { --main: #0f6ab4; --bg: #e7f0f7; --line: #c3d9ec; }
.post { --main: #10a54a; --bg: #e7f6ec; --line: #c3e8d1; }
.delete { --main: #a41e22; --bg: #f5e8e8; --line: #e8c6c7; }
.put { --main: #c5862b; --bg: #f9f2e9; --line: #f0e0ca; }
.foot { margin: 34px 0 0; color: #999; font-size: 32px; line-height: 38px; }
.foot small { font-size: 26px; }

/* dock */
.dock {
  flex: none;
  width: 2719px;
  height: 124px;
  margin: 2px 0 0 80px;
  padding-left: 7.750px;
  display: flex;
  border-radius: 9px 9px 0 0;
  background: linear-gradient(90deg, rgba(112, 118, 142, .35), rgba(90, 98, 122, 0) 30%, rgba(112, 118, 142, .35)), linear-gradient(#5f6678, #656d87);
  box-shadow: 0 -2px #0d121c;
}
.dock svg { width: 100.500px; height: 124px; }
.sep { width: 2px; background: #2c3550; }
.sep.short { height: 60px; margin: 32px 19.500px 0 23.500px; }
.sep.tall { height: 92px; margin: 16px 22.500px 0 23.500px; }
.petals rect { mix-blend-mode: multiply; }
.mono { font-family: "Liberation Mono", monospace; }
.skype { font-family: Lato, sans-serif; }
```
